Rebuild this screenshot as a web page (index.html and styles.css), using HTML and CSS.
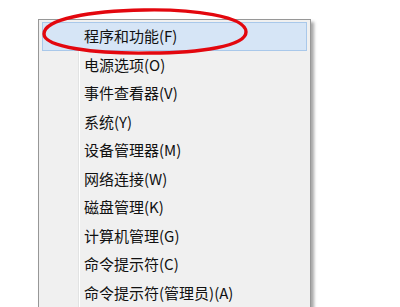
FILE: index.html
```html
<!DOCTYPE html>
<html lang="zh-CN">
<head>
<meta charset="utf-8">
<link rel="stylesheet" href="styles.css">
</head>
<body>
<div class="page">
  <div class="menu">
    <ul class="items">
      <li class="item active">程序和功能(F)</li>
      <li class="item">电源选项(O)</li>
      <li class="item">事件查看器(V)</li>
      <li class="item">系统(Y)</li>
      <li class="item">设备管理器(M)</li>
      <li class="item">网络连接(W)</li>
      <li class="item">磁盘管理(K)</li>
      <li class="item">计算机管理(G)</li>
      <li class="item">命令提示符(C)</li>
      <li class="item">命令提示符(管理员)(A)</li>
    </ul>
  </div>
  <svg class="circle" width="212" height="50" viewBox="0 0 212 50">
    <path d="M104 3 C 152 2, 206 9, 206 25 C 206 39, 160 46, 110 46 C 55 47, 4 40, 4 27 C 4 12, 50 4, 104 3 Z" fill="none" stroke="#e3070e" stroke-width="3.4"/>
  </svg>
</div>
</body>
</html>
```

FILE: styles.css
```css
html, body {
  margin: 0;
  padding: 0;
  background: #ffffff;
  overflow: hidden;
}
.page {
  position: relative;
  width: 400px;
  height: 307px;
  overflow: hidden;
  padding-top: 19px;
  box-sizing: border-box;
}
.menu {
  margin-left: 38px;
  width: 265px;
  height: 300px;
  border: 1px solid #979797;
  background: #f0f0f0;
  padding: 2px 3px;
  box-shadow: 3px 3px 3px rgba(0, 0, 0, 0.35);
}
.items {
  list-style: none;
  margin: 0;
  padding: 0;
  height: 100%;
  background: linear-gradient(to right, transparent 36px, #e2e3e3 36px, #e2e3e3 37px, #ffffff 37px, #ffffff 38px, transparent 38px);
}
.item {
  height: 28.5px;
  padding-left: 41px;
  box-sizing: border-box;
  font-family: "Noto Sans CJK SC", "Microsoft YaHei", sans-serif;
  font-size: 15px;
  color: #111111;
  border: 1px solid transparent;
  line-height: 26.5px;
  white-space: nowrap;
}
.item.active {
  background: #d6e5f6;
  border-color: #a9c8ea;
}
.circle {
  position: absolute;
  left: 40px;
  top: 7px;
}
```
